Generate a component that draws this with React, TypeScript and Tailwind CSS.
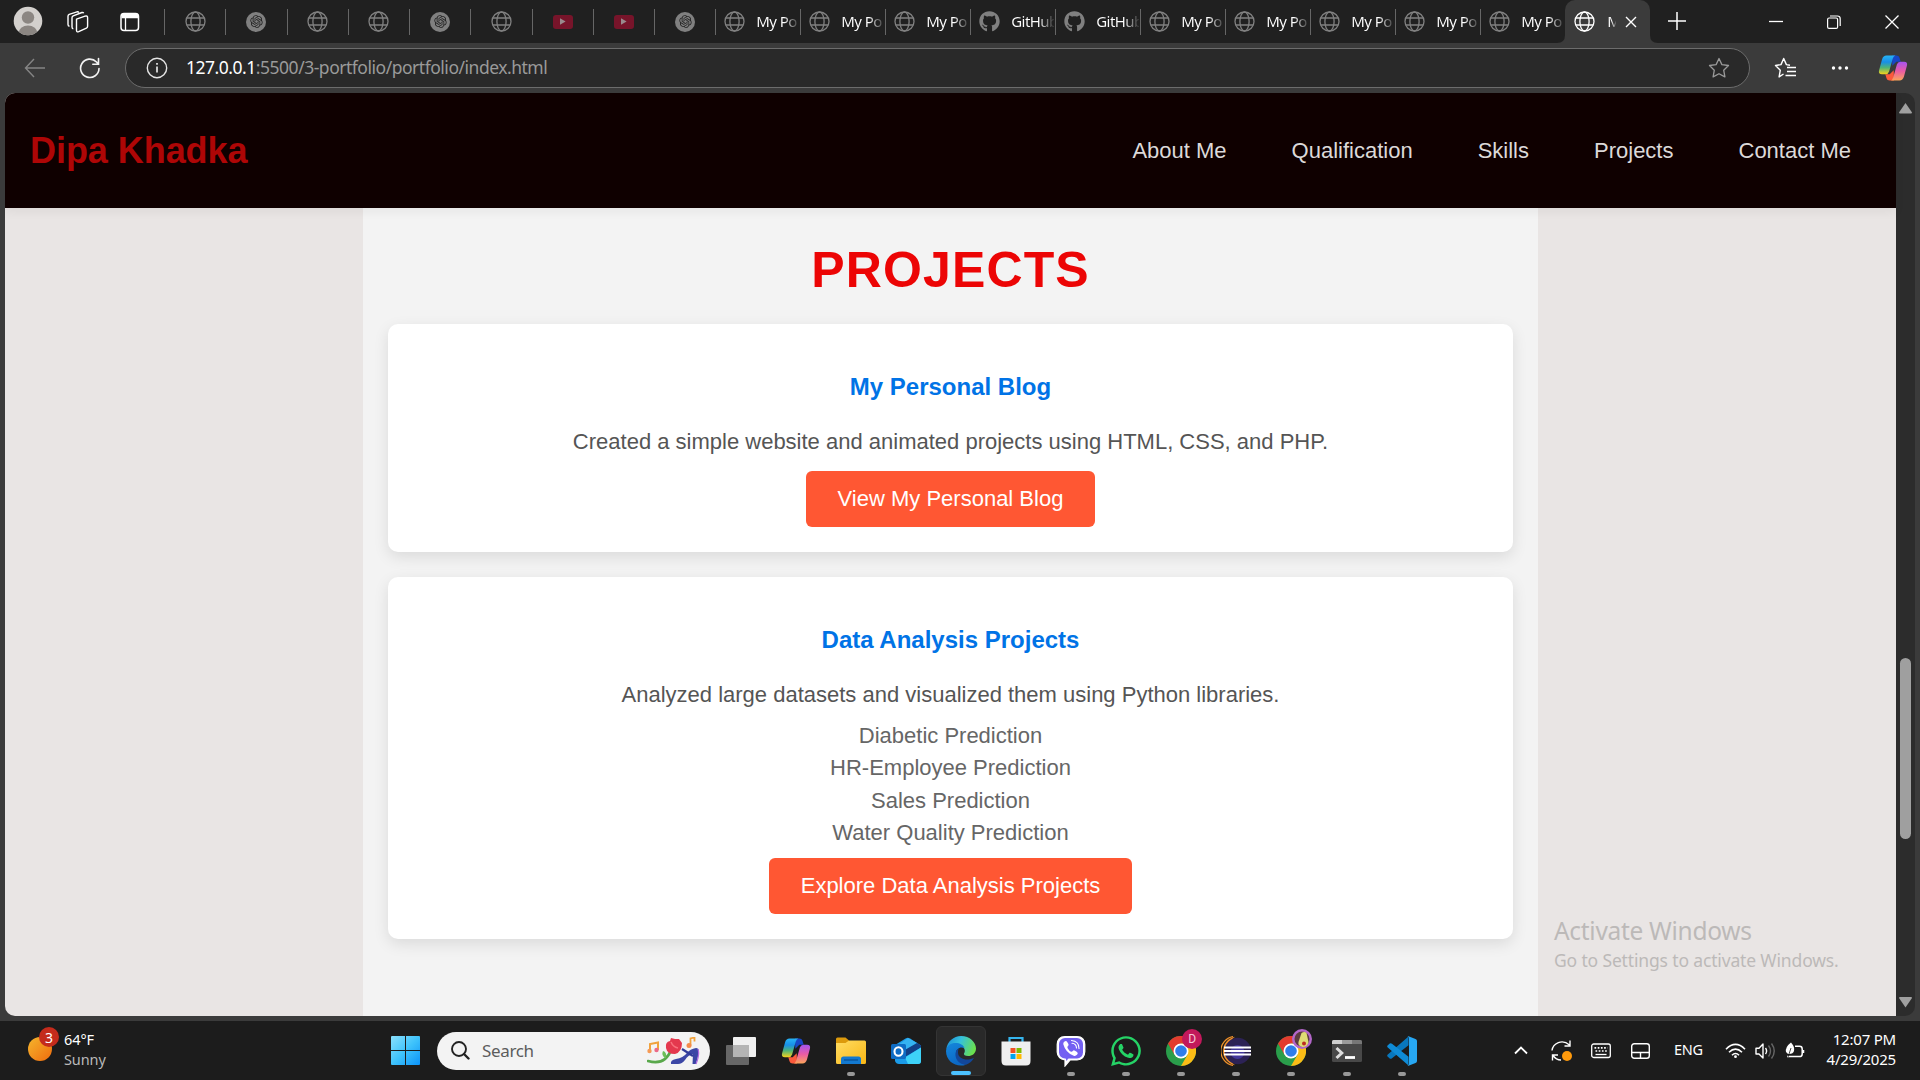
import React from "react";
import { FaGithub, FaWhatsapp } from "react-icons/fa";
import { RiOpenaiFill } from "react-icons/ri";

const Globe = ({ className = "text-[#808080]" }: { className?: string }) => (
  <svg className={className} width="21" height="21" viewBox="0 0 21 21" fill="none" stroke="currentColor" strokeWidth="1.3">
    <circle cx="10.5" cy="10.5" r="9.5" />
    <ellipse cx="10.5" cy="10.5" rx="4.6" ry="9.5" />
    <path d="M1.8 7h17.4M1.8 14h17.4" />
  </svg>
);

const OpenAi = () => (
  <span className="flex h-5 w-5 items-center justify-center rounded-full bg-[#808080]">
    <RiOpenaiFill className="h-[15px] w-[15px] text-[#202020]" />
  </span>
);

const YouTube = () => (
  <span className="flex h-3.5 w-5 items-center justify-center rounded-[3px] bg-[#77142a]">
    <svg width="6" height="7" viewBox="0 0 6 7"><path d="M0 .3v6.4L5.6 3.5z" fill="#9a8a8d" /></svg>
  </span>
);

const smallTabs = ["globe", "ai", "globe", "globe", "ai", "globe", "yt", "yt", "ai"];
const wideTabs = ["My Po", "My Po", "My Po", "GitHub", "GitHub", "My Po", "My Po", "My Po", "My Po", "My Po"];

function TabBar() {
  return (
    <div className="flex h-[43px] shrink-0 bg-[#202020] text-white">
      <div className="flex w-[164px] shrink-0 items-center">
        <svg className="ml-[13px]" width="30" height="36" viewBox="0 0 30 36">
          <defs><clipPath id="avatar"><ellipse cx="15" cy="18" rx="14.3" ry="14.3" /></clipPath></defs>
          <g clipPath="url(#avatar)" transform="translate(0 -1)">
            <path fill="#d3d0cd" d="M0 0h30v36H0z" />
            <circle cx="15" cy="14.5" r="6.2" fill="#8b8682" />
            <ellipse cx="15" cy="30.5" rx="9.5" ry="8" fill="#8b8682" />
          </g>
        </svg>
        <svg className="ml-6" width="22" height="22" viewBox="0 0 22 22" fill="none" stroke="#fff" strokeWidth="1.4" strokeLinejoin="round">
          <path d="M9.5 8.2 18 5.2q2.6-.8 2.6 1.6v8.4q0 1.3-1.2 1.9l-7.7 3.6q-2.2.8-2.2-1.4z" />
          <path d="M6.3 17.8q-1.3-.2-1.3-1.8V6.8q0-1.3 1.2-1.9l8.7-3.4q1.3-.3 1.8.8" />
          <path d="M2.5 15.3Q1 15 1 13.500V5.200q0-1.300 1.200-1.900L10 .8q1.300-.3 1.800.8" />
        </svg>
        <svg className="ml-[31px]" width="20" height="20" viewBox="0 0 20 20" fill="none" stroke="#fff" strokeWidth="1.5">
          <rect x="1" y="1.500" width="17.500" height="17" rx="3" />
          <path d="M1.500 3h16.500M1.500 5h16.500" strokeWidth="2.500" />
          <path d="M5.500 5v13" strokeWidth="1.300" />
        </svg>
      </div>
      {smallTabs.map((t, i) => (
        <div key={i} className="flex w-[61.25px] shrink-0 items-center">
          <span className="h-[26px] w-px bg-[#666]" />
          <span className="flex flex-1 justify-center">{t === "globe" ? <Globe /> : t === "ai" ? <OpenAi /> : <YouTube />}</span>
        </div>
      ))}
      {wideTabs.map((t, i) => (
        <div key={i} className="flex w-[85px] shrink-0 items-center overflow-hidden">
          <span className="h-[26px] w-px shrink-0 bg-[#666]" />
          <span className="ml-2 w-[21px] shrink-0">{t === "GitHub" ? <FaGithub className="h-[21px] w-[21px] text-[#808080]" /> : <Globe />}</span>
          <span className="ml-[11px] w-[43px] overflow-hidden bg-linear-to-r from-white from-65% to-[#333] bg-clip-text font-['Noto_Sans'] text-[15px] tracking-[-0.55px] whitespace-nowrap text-transparent">{t}</span>
        </div>
      ))}
      <div className="relative flex w-[85px] shrink-0 items-center rounded-t-[10px] bg-[#3b3b3b]">
        <svg className="absolute bottom-0 -left-2" width="8" height="8"><path d="M8 0v8H0Q8 8 8 0" fill="#3b3b3b" /></svg>
        <svg className="absolute -right-2 bottom-0" width="8" height="8"><path d="M0 0v8h8Q0 8 0 0" fill="#3b3b3b" /></svg>
        <Globe className="ml-[9px] text-white" />
        <span className="ml-3 w-[9px] overflow-hidden bg-linear-to-r from-white from-50% to-[#555] bg-clip-text font-['Noto_Sans'] text-[15px] text-transparent">M</span>
        <svg className="ml-[9px]" width="12" height="12" viewBox="0 0 12 12" stroke="#fff" strokeWidth="1.4"><path d="m1 1 10 10M11 1 1 11" /></svg>
      </div>
      <svg className="mt-[12px] ml-[18px]" width="18" height="18" viewBox="0 0 18 18" stroke="#fff" strokeWidth="1.5"><path d="M9 0v18M0 9h18" /></svg>
      <div className="ml-auto flex items-center pr-[21.500px]">
        <svg width="14" height="14" stroke="#fff" strokeWidth="1.3"><path d="M0 6.500h14" /></svg>
        <svg className="ml-[44px]" width="14" height="14" viewBox="0 0 14 14" fill="none" stroke="#fff" strokeWidth="1.200">
          <rect x=".6" y="3" width="10" height="10.400" rx="1.500" />
          <path d="M3 1h7.500q2.700 0 2.700 2.700V11" />
        </svg>
        <svg className="ml-[44px]" width="14" height="14" viewBox="0 0 14 14" stroke="#fff" strokeWidth="1.300"><path d="m.5.5 13 13M13.500.5l-13 13" /></svg>
      </div>
    </div>
  );
}

const Copilot = ({ id, size }: { id: string; size: number }) => (
  <svg width={size} height={size} viewBox="0 0 30 30">
    <defs>
      <linearGradient id={id + "a"} x1="0" y1="0" x2="0" y2="1"><stop stopColor="#27b4f5" /><stop offset=".35" stopColor="#188ee8" /><stop offset=".65" stopColor="#4fb477" /><stop offset="1" stopColor="#f5d21c" /></linearGradient>
      <linearGradient id={id + "b"} x1="0" y1="0" x2="0" y2="1"><stop stopColor="#a454f0" /><stop offset=".5" stopColor="#ea5ba4" /><stop offset="1" stopColor="#fba55a" /></linearGradient>
    </defs>
    <path d="M14 2.500h4.500q2.300 0 3 2.300l1.200 4h-4.400l-4 4z" fill="#1746c6" />
    <path d="M16 27.500h-4.500q-2.300 0-3-2.300l-1.200-4h4.400l4-4z" fill="#fb5a3c" />
    <path d="M8.500 2.500h9q-2 .5-2.700 3l-3.700 13q-.8 2.700-3.600 2.700H4q-4 0-2.900-4l3-11Q5.200 2.500 8.500 2.500" fill={`url(#${id}a)`} />
    <path d="M21.500 27.500h-9q2-.5 2.700-3l3.700-13q.8-2.700 3.600-2.700H26q4 0 2.900 4l-3 11q-1.100 3.700-4.400 3.700" fill={`url(#${id}b)`} />
  </svg>
);

function Toolbar() {
  return (
    <div className="flex h-[50px] shrink-0 items-center bg-[#3b3b3b]">
      <svg className="ml-[24px]" width="22" height="20" viewBox="0 0 22 20" fill="none" stroke="#858585" strokeWidth="1.400"><path d="M21 10H1.500M10 1 1.500 10l8.500 9" /></svg>
      <svg className="ml-[33px]" width="22" height="22" viewBox="0 0 22 22" fill="none" stroke="#f2f2f2" strokeWidth="1.600" strokeLinecap="round"><path d="M20 11.500A9.200 9.200 0 1 1 17.500 5l1.800 2M19.500 1.500v5.700h-5.700" /></svg>
      <div className="ml-[24px] flex h-10 w-[1625px] items-center rounded-full border border-[#6c6c6c] bg-[#292929]">
        <svg className="ml-[20px]" width="22" height="22" viewBox="0 0 22 22" fill="none" stroke="#e4e4e4" strokeWidth="1.400"><circle cx="11" cy="11" r="9.700" /><path d="M11 9.500v6M11 6v1.800" strokeWidth="1.700" /></svg>
        <span className="mb-px ml-[18px] font-['Noto_Sans'] text-[17.500px] tracking-[-0.480px] text-[#9a9a9a]"><span className="text-white">127.0.0.1</span>:5500/3-portfolio/portfolio/index.html</span>
        <svg className="mr-[19px] ml-auto" width="22" height="22" viewBox="0 0 22 22" fill="none" stroke="#9a9a9a" strokeWidth="1.300" strokeLinejoin="round"><path d="m11 1.500 2.900 6.100 6.600.9-4.800 4.700 1.200 6.700L11 16.700l-5.900 3.200 1.200-6.700L1.500 8.500l6.600-.9z" /></svg>
      </div>
      <svg className="ml-[24px]" width="23" height="22" viewBox="0 0 23 22" fill="none" stroke="#fff" strokeWidth="1.400" strokeLinejoin="round"><path d="m9.500 17-4.400 2.900 1.200-6.700L1.500 8.500l5.500-.9 2.700-6.100 2.700 6.100 3.600.6M13 10.500h9M13 14.500h9M11.500 18.500h10.500" /></svg>
      <svg className="ml-[34px]" width="18" height="6" fill="#fff"><circle cx="2.500" cy="3" r="1.700" /><circle cx="9" cy="3" r="1.700" /><circle cx="15.500" cy="3" r="1.700" /></svg>
      <span className="ml-[29px]"><Copilot id="tb" size={30} /></span>
    </div>
  );
}

const Button = ({ children }: { children: string }) => (
  <a className="flex h-14 items-center rounded-md bg-[#ff5733] px-[31.250px] pb-[2px] text-[22px] whitespace-nowrap text-white">{children}</a>
);

function Page() {
  return (
    <div className="flex h-[923px] min-w-0 flex-1 flex-col bg-[#e9e5e4] font-['Liberation_Sans',Arial,sans-serif]">
      <header className="z-10 flex h-[115px] shrink-0 items-center bg-[#0f0000] pr-[45px] pl-[25px] shadow-[0_4px_10px_rgba(0,0,0,0.05)]">
        <h1 className="text-[36px] leading-none font-bold tracking-[-0.050px] text-[#ae0606]">Dipa Khadka</h1>
        <nav className="ml-auto flex gap-[65px] text-[22px] text-[#dcd9d9]">
          {["About Me", "Qualification", "Skills", "Projects", "Contact Me"].map((n) => <a key={n}>{n}</a>)}
        </nav>
      </header>
      <main className="ml-[358px] flex w-[1175px] flex-1 flex-col bg-[#f3f3f3] px-[25px] pt-[32px] text-center">
        <h2 className="h-[60px] text-[50px] leading-[60px] font-bold tracking-[1.150px] text-[#ec0505]">PROJECTS</h2>
        <section className="mt-[24px] flex h-[228px] flex-col items-center rounded-[10px] bg-white pt-[49px] shadow-[0_5px_15px_rgba(0,0,0,0.1)]">
          <h3 className="text-2xl leading-7 font-bold text-[#0073e6]">My Personal Blog</h3>
          <p className="mt-[25px] mb-[13px] text-[22px] leading-8 text-[#555]">Created a simple website and animated projects using HTML, CSS, and PHP.</p>
          <Button>View My Personal Blog</Button>
        </section>
        <section className="mt-[25px] flex h-[362px] flex-col items-center rounded-[10px] bg-white pt-[49px] shadow-[0_5px_15px_rgba(0,0,0,0.1)]">
          <h3 className="text-2xl leading-7 font-bold text-[#0073e6]">Data Analysis Projects</h3>
          <p className="mt-[25px] mb-[9px] text-[22px] leading-8 text-[#555]">Analyzed large datasets and visualized them using Python libraries.</p>
          <ul className="mb-[8.500px] text-[22px] leading-[32.400px] text-[#666]">
            {["Diabetic Prediction", "HR-Employee Prediction", "Sales Prediction", "Water Quality Prediction"].map((n) => <li key={n}>{n}</li>)}
          </ul>
          <Button>Explore Data Analysis Projects</Button>
        </section>
      </main>
    </div>
  );
}

const Chrome = () => (
  <svg width="30" height="30" viewBox="0 0 30 30">
    <circle cx="15" cy="15" r="15" fill="#2a9e4b" />
    <path d="M2 7.500A15 15 0 0 1 28 7.500H15L8.500 18.700z" fill="#e33b2e" />
    <path d="M28 7.500A15 15 0 0 1 15 30l6.500-11.300L21.500 11 15 7.500z" fill="#fbbc16" />
    <circle cx="15" cy="15" r="7.500" fill="#fff" /><circle cx="15" cy="15" r="5.800" fill="#2f7de9" />
  </svg>
);

const Edge = () => (
  <svg width="30" height="30" viewBox="0 0 30 30">
    <defs>
      <linearGradient id="eg" x1="0" y1=".2" x2="1" y2=".5"><stop stopColor="#1c8fd8" /><stop offset=".45" stopColor="#35c1dc" /><stop offset="1" stopColor="#6be04c" /></linearGradient>
      <linearGradient id="eb" x1="0" y1="0" x2=".4" y2="1"><stop stopColor="#1487dc" /><stop offset="1" stopColor="#0c68c4" /></linearGradient>
    </defs>
    <path d="M.3 13C1.500 5.500 7.500 0 15 0c9 0 15 6.500 15 12.500 0 5-4 7.500-7.700 7.500-3.500 0-4.800-1.500-4.300-2.500 1.400-2 1-4.500-.7-6C13 7.500 4.500 7.500.3 13" fill="url(#eg)" />
    <path d="M0 15C.5 9.500 5 7 9.500 7c4.500 0 8 2 9 5-5-2-9 1.500-8.500 6 .7 6 5.500 9.500 10 10.700C11 32 0 26 0 15" fill="url(#eb)" />
    <path d="M12.800 12.200C7 15 8.500 28 20 28.700c3.500-1.200 6.500-4 8-7-6 3.500-15.800 1.800-16-5-.1-1.600.2-3.200.8-4.500" fill="#12479a" />
  </svg>
);

const Folder = () => (
  <svg width="30" height="28" viewBox="0 0 30 28">
    <defs><linearGradient id="fo" x1="0" y1="0" x2="1" y2="1"><stop stopColor="#ffdc63" /><stop offset="1" stopColor="#f9b715" /></linearGradient></defs>
    <path d="M0 2q0-1.500 1.500-1.500h8L13 3.500V9H0z" fill="#dc9a0c" />
    <path d="M0 6h9.500L13 3.500h15.500Q30 3.500 30 5v20.500Q30 27 28.500 27h-27Q0 27 0 25.500z" fill="url(#fo)" />
    <path d="M5 27v-5q0-2.500 2.500-2.500h15q2.500 0 2.500 2.500v5z" fill="#1379d0" /><path d="M8 23h14" stroke="#0b559b" strokeWidth="1.400" />
  </svg>
);

const Outlook = () => (
  <svg width="30" height="28" viewBox="0 0 30 28">
    <path d="M4 8 15 1.200Q17 .3 19 1.500l11 7V24q0 3-3 3H8q-3 0-4-3z" fill="#1b9be8" />
    <path d="M7 8 17 1l9 5L12 15z" fill="#35b3f2" /><path d="m12 14 14-8 4 2.500v2L14 20z" fill="#123f87" />
    <path d="m30 10.500-16 10 3 6.500h10q3 0 3-3z" fill="#3ed2f8" />
    <rect y="7" width="15" height="15" rx="1.500" fill="#0f6cc4" /><ellipse cx="7.500" cy="14.500" rx="4" ry="4.300" fill="none" stroke="#fff" strokeWidth="2.100" />
  </svg>
);

const Store = () => (
  <svg width="30" height="30" viewBox="0 0 30 30">
    <path d="M8.500 6V2h13v4" fill="none" stroke="#35b5ee" strokeWidth="2.200" />
    <path d="M.5 5.500h29V25q0 4.500-4.500 4.500H5Q.5 29.500.5 25z" fill="#efefef" />
    <path d="M9.500 12h5v5h-5z" fill="#f25022" /><path d="M15.500 12h5v5h-5z" fill="#7fba00" /><path d="M9.500 18h5v5h-5z" fill="#00a4ef" /><path d="M15.500 18h5v5h-5z" fill="#ffb900" />
  </svg>
);

const Eclipse = () => (
  <svg width="30" height="30" viewBox="0 0 30 30">
    <path d="M14 .8A14.400 14.400 0 0 0 14 29.200 17 17 0 0 1 14 .8" fill="#f0912a" />
    <circle cx="16.800" cy="15" r="13.200" fill="#2c2255" /><circle cx="16.500" cy="16" r="7" fill="#43379a" />
    <path d="M12 .6A14.600 14.600 0 0 0 12 29.400" fill="none" stroke="#f0912a" strokeWidth="1.300" />
    <path d="M3 11.500h27M3 15h27M3 18.500h27" stroke="#fff" strokeWidth="1.900" />
  </svg>
);

const Terminal = () => (
  <svg width="30" height="30" viewBox="0 0 30 30">
    <rect y="4" width="30" height="22" rx="1.500" fill="#484848" /><path d="M0 8V5.500Q0 4 1.500 4H10v4z" fill="#cfcfcf" /><path d="M10 4h10v4H10z" fill="#9b9b9b" /><path d="M20 4h8.500Q30 4 30 5.500V8H20z" fill="#777" />
    <path d="m4.500 12 5.300 5-5.300 5" fill="none" stroke="#ddd" strokeWidth="3" /><path d="M13 21.500h10" stroke="#fff" strokeWidth="2.800" />
  </svg>
);

const VsCode = () => (
  <svg width="30" height="30" viewBox="0 0 30 30">
    <path d="M.8 18.500 21.500.5v8.700L5 22.300q-1.200 1-2.300.1L.8 20.800q-1.200-1.200 0-2.300" fill="#0877bd" />
    <path d="M.8 11.500 21.500 29.500v-8.700L5 7.700q-1.200-1-2.300-.1L.8 9.200q-1.200 1.200 0 2.300" fill="#0f8bd6" />
    <path d="M21.500.2 28.500 3Q30 3.700 30 5v20q0 1.300-1.500 2l-7 2.800q-.5.200-1-.3 1.500.2 1.500-2V2.500q0-2-1.500-2 .5-.5 1-.3" fill="#27a7f2" />
  </svg>
);

const Viber = () => (
  <svg width="30" height="32" viewBox="0 0 30 32">
    <path d="M9 1.500h12q7.500 0 7.800 8v7q-.3 8-7.800 8.500h-7L9 31v-6Q1.500 23.500 1.200 17V9.500Q1.500 1.500 9 1.500" fill="#fff" stroke="#fff" strokeWidth="1.200" />
    <rect x="3" y="3" width="24" height="20.500" rx="6" fill="#7360f2" />
    <path d="M9 21h5l-3.500 5z" fill="#7360f2" />
    <path d="M8.500 6.500q1.600-1.200 2.700.4l1.200 2q.7 1.300-.6 2.200-.9 1 0 2.500 1.300 2.500 3.300 3.100 1 .2 1.700-.8.900-1.100 2.200-.2l2 1.400q1.500 1.200.2 2.500-1.700 2-3.500 1.200Q9.700 18 7.300 9.300q-.4-1.700 1.200-2.800" fill="#fff" />
    <path d="M15.500 5.500q7.500.5 7.500 8M16 8.300q4.300.3 4.500 4.700" fill="none" stroke="#fff" strokeWidth="1.100" strokeLinecap="round" />
  </svg>
);

const apps: { icon: React.ReactNode; run?: boolean; active?: boolean; badge?: string }[] = [
  { icon: <svg width="30" height="28"><rect y="8" width="23" height="20" rx="1" fill="#676767" /><rect x="7" y="0" width="23" height="20" rx="1" fill="#f0f0f0" /><path d="M7 8h16v12H7z" fill="#b5b5b5" /></svg> },
  { icon: <Copilot id="dock" size={30} /> },
  { icon: <Folder />, run: true },
  { icon: <Outlook /> },
  { icon: <Edge />, active: true },
  { icon: <Store /> },
  { icon: <Viber />, run: true },
  { icon: <FaWhatsapp className="h-[34px] w-[34px] text-[#25d366]" />, run: true },
  { icon: <Chrome />, run: true, badge: "D" },
  { icon: <Eclipse />, run: true },
  { icon: <Chrome />, run: true, badge: "pic" },
  { icon: <Terminal />, run: true },
  { icon: <VsCode />, run: true },
];

function Taskbar() {
  return (
    <div className="flex h-[59px] shrink-0 items-center bg-[#1c1c1c] font-['Noto_Sans'] text-white">
      <div className="relative -mt-[3px] ml-[28px] h-6 w-6 rounded-full bg-linear-to-br from-[#f3b52c] to-[#ee6a0c]">
        <span className="absolute -top-[10px] left-[11px] flex h-5 w-5 items-center justify-center rounded-full bg-[#c42b1c] text-[14px]">3</span>
      </div>
      <div className="-mt-[3px] ml-[12px] w-[80px] text-[14.500px] leading-5 tracking-[-0.100px]"><div>64°F</div><div className="text-[#b9b9b9]">Sunny</div></div>
      <svg className="ml-[247px]" width="29" height="29" viewBox="0 0 29 29">
        <defs><linearGradient id="win" x1="0" y1="0" x2="1" y2="1"><stop stopColor="#8be0fc" /><stop offset=".5" stopColor="#3fc3fb" /><stop offset="1" stopColor="#0b92f8" /></linearGradient></defs>
        <path d="M0 1q0-1 1-1h13v14H0zM15 0h13q1 0 1 1v13H15zM0 15h14v14H1q-1 0-1-1zM15 15h14v13q0 1-1 1H15z" fill="url(#win)" />
      </svg>
      <div className="ml-[17px] flex h-[38px] w-[273px] shrink-0 items-center rounded-full bg-[#f3f3f3]">
        <svg className="ml-[14px]" width="19" height="19" viewBox="0 0 19 19" fill="none" stroke="#222" strokeWidth="1.900" strokeLinecap="round"><circle cx="8" cy="8" r="7" /><path d="m13 13 4.500 4.500" strokeWidth="2.400" /></svg>
        <span className="mt-px ml-[12px] text-[17px] tracking-[-0.350px] text-[#5c5c5c]">Search</span>
        <svg className="mr-[10px] ml-auto" width="53" height="28" viewBox="0 0 53 28">
          <path d="M3 14V7l8-1.500V13" fill="none" stroke="#f0a23c" strokeWidth="2" /><circle cx="2.500" cy="14" r="2.200" fill="#f59a55" /><circle cx="9.500" cy="13" r="2.200" fill="#ec6a86" />
          <path d="M43.500 8.500V1.500l4-1v4" fill="none" stroke="#f0a23c" strokeWidth="1.800" /><circle cx="42" cy="8.500" r="2.500" fill="#f58b4b" />
          <path d="M1 24q17 5 23-11" fill="none" stroke="#59a84b" strokeWidth="2.600" strokeLinecap="round" /><path d="M18 21q-4-3-2-7 4 1 3 7" fill="#6cbf59" />
          <path d="M19 11q-1-6 4-7l1-3 4 1 4 0 3 4q0 9-7 11-8 0-9-6" fill="#e4384e" /><path d="M24 5q2 5 7 6" fill="none" stroke="#f9707c" strokeWidth="1.500" />
          <path d="M24 27q-1-4 5-5 7-1 11-6 3-4 9-5 3 0 3 5l-3 11h-3.500l.5-10q-5 1-8 6-3 4-7 4z" fill="#3b46a5" /><path d="m35 12 11 7" stroke="#303b98" strokeWidth="2.200" /><path d="M51 12q2 5-2 15" fill="none" stroke="#b06be0" strokeWidth="1.200" />
        </svg>
      </div>
      <div className="ml-[3px] flex">
        {apps.map((a, i) => (
          <div key={i} className="flex w-[55.100px] justify-center">
            <div className={a.active ? "relative flex h-[50px] w-[50px] items-center justify-center rounded-md border border-[#343434] bg-[#292929]" : "relative flex h-[50px] w-[50px] items-center justify-center"}>
              {a.icon}
              {a.run && <span className="absolute bottom-0 h-1 w-2 rounded-full bg-[#989898]" />}
              {a.active && <span className="absolute bottom-0 h-1 w-5 rounded-full bg-[#4cc2ff]" />}
              {a.badge === "D" && <span className="absolute top-[3px] left-[26px] flex h-5 w-5 items-center justify-center rounded-full bg-[#c2185b] font-[Roboto] text-[12px] text-[#f6c8da]">D</span>}
              {a.badge === "pic" && (
                <svg className="absolute top-[3px] left-[26px]" width="20" height="20" viewBox="0 0 20 20"><circle cx="10" cy="10" r="10" fill="#b266c8" /><circle cx="10" cy="10" r="7.500" fill="#5c3b3f" /><path d="M9.500 4q3-2 5 0l2 9q-1 5-6 5-5-1-4-5z" fill="#dfdc74" /><circle cx="12" cy="14.500" r="2" fill="#bd2c20" /></svg>
              )}
            </div>
          </div>
        ))}
      </div>
      <div className="ml-auto flex items-center pr-[24px]">
        <svg width="14" height="9" viewBox="0 0 14 9" fill="none" stroke="#fff" strokeWidth="1.800"><path d="m1 7.500 6-6 6 6" /></svg>
        <svg className="ml-[23px]" width="22" height="22" viewBox="0 0 22 22" fill="none" stroke="#fff" strokeWidth="1.400"><path d="M1 10.500C2 3.500 11-1.500 18.500 5M19 .5V6h-5.500M1.500 20.500v-5.500H7M2 15.500q3 4.500 8 4.500" /><circle cx="16" cy="16" r="5" fill="#ff9a0c" stroke="none" /></svg>
        <svg className="ml-[18px]" width="20" height="16" viewBox="0 0 20 16" fill="none" stroke="#fff" strokeWidth="1.300"><rect x=".7" y="1" width="18.600" height="13.500" rx="2" /><path d="M3.500 4.800h13M4.500 8h12" strokeWidth="1.700" strokeDasharray="1.700 1.500" /><path d="M4.500 11.500h11" /></svg>
        <svg className="ml-[20px]" width="19" height="16" viewBox="0 0 19 16" fill="none" stroke="#fff" strokeWidth="1.400"><rect x=".7" y=".7" width="17.600" height="14.500" rx="2.500" /><path d="M1 9.500h17M9.500 9.500V15" /></svg>
        <span className="-mt-px ml-[24px] w-[30px] text-[14.500px] tracking-[-0.300px]">ENG</span>
        <svg className="ml-[21px]" width="21" height="16" viewBox="0 0 21 16" fill="none" stroke="#fff" strokeWidth="1.600"><path d="M1 6.200q9.500-9.500 19 0M4 9.300q6.500-6.500 13 0M7 12.200q3.500-3.500 7 0" /><circle cx="10.500" cy="13.700" r="1.400" fill="#fff" stroke="none" /></svg>
        <svg className="ml-[9px]" width="21" height="18" viewBox="0 0 21 18" fill="none" stroke="#fff" strokeWidth="1.400"><path d="M1 6.200h3L8 2v14l-4-4H1zM10.500 6q2.200 3 0 6" strokeLinejoin="round" /><path d="M13.500 3.500q4 5.500 0 11M16.500 1.500q5.500 7.500 0 15" stroke="#666" /></svg>
        <svg className="ml-[9px]" width="21" height="17" viewBox="0 0 21 17" fill="none" stroke="#fff" strokeWidth="1.500"><path d="M10 4.200h4.500q2.700 0 2.700 2.700v5q0 2.700-2.700 2.700H2M18.500 8v3" /><path d="M1 10q-1-5 5-9.500Q10 5 9 9q-1 3.500-6 3z" fill="#fff" stroke="none" /><path d="M6 6 3 15" stroke="#1c1c1c" strokeWidth=".8" /></svg>
        <div className="-mt-[3px] ml-[11px] w-[79px] text-right text-[15px] leading-5 tracking-[-0.200px] whitespace-nowrap"><div>12:07 PM</div><div>4/29/2025</div></div>
      </div>
    </div>
  );
}

export default function App() {
  return (
    <div className="relative flex h-[1080px] w-[1920px] flex-col overflow-hidden bg-[#3b3b3b]">
      <TabBar />
      <Toolbar />
      <div className="mx-[5px] mb-[5px] flex h-[923px] shrink-0 overflow-hidden rounded-[10px]">
        <Page />
        <div className="flex w-[19px] shrink-0 flex-col items-center bg-[#2c2c2c]">
          <svg className="mt-[10px]" width="13" height="11"><path d="M6.500 0 13 9.500q0 1-1 1H1q-1 0-1-1z" fill="#a0a0a0" /></svg>
          <div className="mt-[544px] h-[181px] w-[11px] rounded-full bg-[#9f9f9f]" />
          <svg className="mt-[158px]" width="13" height="11"><path d="M6.500 10.500 0 1q0-1 1-1h11q1 0 1 1z" fill="#a0a0a0" /></svg>
        </div>
      </div>
      <Taskbar />
      <div className="absolute top-[915px] left-[1554px] font-['Noto_Sans'] whitespace-nowrap text-[#bcb9b8]">
        <div className="text-[24.500px] leading-8 tracking-[-0.300px]">Activate Windows</div>
        <div className="text-[17.500px] leading-[26px] tracking-[-0.150px]">Go to Settings to activate Windows.</div>
      </div>
    </div>
  );
}
